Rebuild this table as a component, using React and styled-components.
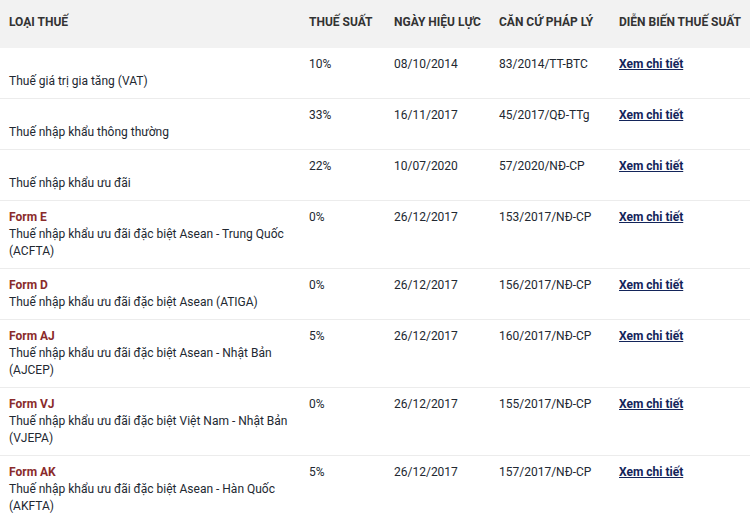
import React from "react";
import styled, { createGlobalStyle } from "styled-components";

const GlobalStyle = createGlobalStyle`
  body {
    margin: 0;
    background: #ffffff;
    font-family: Roboto, "Noto Sans", sans-serif;
  }
`;

const Table = styled.table`
  width: 750px;
  border-collapse: collapse;
  table-layout: fixed;
  font-size: 12px;
  line-height: 17px;
  color: #222831;
`;

// widths are content widths: column width minus the 18px horizontal padding
const HeadCell = styled.th`
  width: ${(props) => props.$width - 18}px;
  height: 45px;
  padding: 0 9px 3px;
  background: #f2f2f2;
  text-align: left;
  font-weight: 700;
  font-size: 12px;
  text-transform: uppercase;
  color: #333333;
  white-space: nowrap;
`;

const Row = styled.tr`
  border-bottom: 1px solid #ececec;
`;

const Cell = styled.td`
  padding: 8px 9px;
  vertical-align: top;
`;

const FormLabel = styled.div`
  min-height: 17px;
  font-weight: 700;
  color: #8a2b2b;
`;

const DetailLink = styled.a`
  font-weight: 700;
  color: #13245a;
  text-decoration: underline;
  cursor: pointer;
`;

const columns = [
  { title: "Loại thuế", width: 300 },
  { title: "Thuế suất", width: 85 },
  { title: "Ngày hiệu lực", width: 105 },
  { title: "Căn cứ pháp lý", width: 120 },
  { title: "Diễn biến thuế suất", width: 140 },
];

const rows = [
  { form: "", name: "Thuế giá trị gia tăng (VAT)", rate: "10%", date: "08/10/2014", law: "83/2014/TT-BTC" },
  { form: "", name: "Thuế nhập khẩu thông thường", rate: "33%", date: "16/11/2017", law: "45/2017/QĐ-TTg" },
  { form: "", name: "Thuế nhập khẩu ưu đãi", rate: "22%", date: "10/07/2020", law: "57/2020/NĐ-CP" },
  { form: "Form E", name: "Thuế nhập khẩu ưu đãi đặc biệt Asean - Trung Quốc (ACFTA)", rate: "0%", date: "26/12/2017", law: "153/2017/NĐ-CP" },
  { form: "Form D", name: "Thuế nhập khẩu ưu đãi đặc biệt Asean (ATIGA)", rate: "0%", date: "26/12/2017", law: "156/2017/NĐ-CP" },
  { form: "Form AJ", name: "Thuế nhập khẩu ưu đãi đặc biệt Asean - Nhật Bản (AJCEP)", rate: "5%", date: "26/12/2017", law: "160/2017/NĐ-CP" },
  { form: "Form VJ", name: "Thuế nhập khẩu ưu đãi đặc biệt Việt Nam - Nhật Bản (VJEPA)", rate: "0%", date: "26/12/2017", law: "155/2017/NĐ-CP" },
  { form: "Form AK", name: "Thuế nhập khẩu ưu đãi đặc biệt Asean - Hàn Quốc (AKFTA)", rate: "5%", date: "26/12/2017", law: "157/2017/NĐ-CP" },
];

const App = () => {
  return (
    <>
      <GlobalStyle />
      <Table>
        <thead>
          <tr>
            {columns.map((col) => (
              <HeadCell key={col.title} $width={col.width}>
                {col.title}
              </HeadCell>
            ))}
          </tr>
        </thead>
        <tbody>
          {rows.map((row) => (
            <Row key={row.name}>
              <Cell>
                <FormLabel>{row.form}</FormLabel>
                <div>{row.name}</div>
              </Cell>
              <Cell>{row.rate}</Cell>
              <Cell>{row.date}</Cell>
              <Cell>{row.law}</Cell>
              <Cell>
                <DetailLink>Xem chi tiết</DetailLink>
              </Cell>
            </Row>
          ))}
        </tbody>
      </Table>
    </>
  );
};

export default App;
